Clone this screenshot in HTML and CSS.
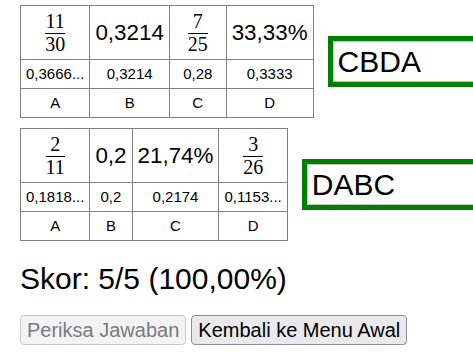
FILE: index.html
```html
<!DOCTYPE html>
<html lang="id">
<head>
    <meta charset="UTF-8">
    <meta name="viewport" content="width=device-width, initial-scale=1.0">
    <title>Urutkan Bilangan</title>
    <link rel="stylesheet" href="styles.css">
</head>
<body>
    <div class="soal">
        <table>
            <tr class="nilai">
                <td><span class="frac"><span class="num">11</span><span class="bar"></span><span class="den">30</span></span></td>
                <td>0,3214</td>
                <td><span class="frac"><span class="num">7</span><span class="bar"></span><span class="den">25</span></span></td>
                <td>33,33%</td>
            </tr>
            <tr class="desimal">
                <td>0,3666...</td>
                <td>0,3214</td>
                <td>0,28</td>
                <td>0,3333</td>
            </tr>
            <tr class="huruf">
                <td>A</td>
                <td>B</td>
                <td>C</td>
                <td>D</td>
            </tr>
        </table>
        <input class="jawaban" type="text" value="CBDA">
    </div>

    <div class="soal">
        <table>
            <tr class="nilai">
                <td><span class="frac"><span class="num">2</span><span class="bar"></span><span class="den">11</span></span></td>
                <td>0,2</td>
                <td>21,74%</td>
                <td><span class="frac"><span class="num">3</span><span class="bar"></span><span class="den">26</span></span></td>
            </tr>
            <tr class="desimal">
                <td>0,1818...</td>
                <td>0,2</td>
                <td>0,2174</td>
                <td>0,1153...</td>
            </tr>
            <tr class="huruf">
                <td>A</td>
                <td>B</td>
                <td>C</td>
                <td>D</td>
            </tr>
        </table>
        <input class="jawaban" type="text" value="DABC">
    </div>

    <h2 class="skor">Skor: 5/5 (100,00%)</h2>

    <div class="tombol">
        <button disabled>Periksa Jawaban</button>
        <button>Kembali ke Menu Awal</button>
    </div>
</body>
</html>
```

FILE: styles.css
```css
*{
    box-sizing: border-box;
    margin: 0;
    padding: 0;
}
html, body{
    overflow: hidden;
}
body{
    font-family: "Liberation Sans", Arial, sans-serif;
    color: black;
    background: white;
    padding: 5px 0 0 20px;
}
.soal{
    display: flex;
    align-items: center;
    margin-bottom: 10px;
}
table{
    border-collapse: collapse;
    flex-shrink: 0;
}
td{
    border: 1px solid grey;
    padding: 5px;
    text-align: center;
    vertical-align: middle;
    white-space: nowrap;
}
.nilai td{
    font-size: 22.4px;
    height: 54px;
}
.desimal td, .huruf td{
    font-size: 15px;
    line-height: 18px;
    padding: 5px;
}
.frac{
    display: inline-flex;
    flex-direction: column;
    align-items: center;
    vertical-align: middle;
    font-family: "Liberation Serif", "Times New Roman", serif;
    font-size: 20px;
    line-height: 20px;
    padding: 0 2.4px;
    margin: 0 10.5px;
}
.frac .num{
    padding-bottom: 2px;
}
.frac .bar{
    align-self: stretch;
    height: 1px;
    background: black;
}
.jawaban{
    flex-shrink: 0;
    width: 260px;
    height: 51px;
    margin-left: 14px;
    font-family: "Liberation Sans", Arial, sans-serif;
    font-size: 30px;
    padding: 0 5px;
    border: 5px solid green;
    box-shadow: inset 0 0 0 1px #c4c4c4;
    color: black;
    background: white;
    outline: none;
}
.skor{
    font-size: 30px;
    font-weight: normal;
    margin-top: 21px;
    line-height: normal;
}
.tombol{
    display: flex;
    gap: 5px;
    margin-top: 18.5px;
}
button{
    font-family: "Liberation Sans", Arial, sans-serif;
    font-size: 20px;
    line-height: normal;
    padding: 3px 6px 2px;
    border: 1px solid #8f8f9d;
    border-radius: 4px;
    background: #e9e9ed;
    color: black;
}
button:disabled{
    border-color: #c6c6cc;
    background: #f3f3f5;
    color: #7a7a7a;
}
```
